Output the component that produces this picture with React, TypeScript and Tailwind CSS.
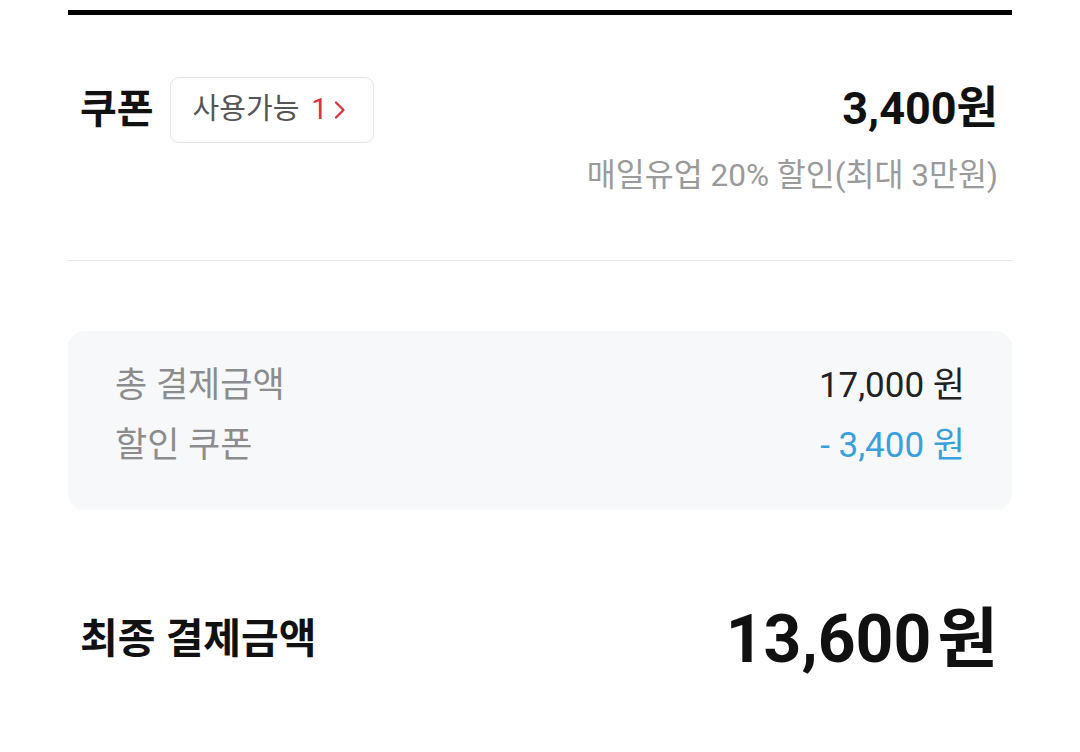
const font = { fontFamily: 'Roboto, "Noto Sans CJK KR", sans-serif' };

function Chevron() {
  return (
    <svg viewBox="0 0 12 20" className="ml-[6px] h-[20px] w-[12px]" fill="none" stroke="currentColor" strokeWidth={2.3} strokeLinecap="round" strokeLinejoin="round">
      <path d="M2 2.5 9.5 10 2 17.5" />
    </svg>
  );
}

export default function App() {
  return (
    <div className="min-h-screen bg-white px-[68px] pt-[10px]" style={font}>
      <div className="h-[5px] bg-black" />

      <div className="flex items-start justify-between pl-3 pr-[14px] pt-[62px]">
        <div className="flex items-center gap-[16px]">
          <span className="text-[40px] font-bold leading-none text-[#111]">쿠폰</span>
          <div className="flex h-[66px] items-center rounded-[9px] border border-[#e4e4e4] pl-[22px] pr-[27px] text-[29px] text-[#555]">
            <span>사용가능</span>
            <span className="ml-[12px] text-[#d8343f]">1</span>
            <span className="text-[#d8343f]">
              <Chevron />
            </span>
          </div>
        </div>
        <div className="flex flex-col items-end">
          <span className="mt-[6px] text-[45px] font-bold leading-[52px] text-[#111]">3,400원</span>
          <span className="mt-[21px] text-[31.5px] leading-[40px] text-[#9a9a9a]">매일유업 20% 할인(최대 3만원)</span>
        </div>
      </div>

      <div className="mt-[64px] h-px bg-[#e6e6e6]" />

      <div className="mt-[70px] flex h-[179px] flex-col justify-center gap-[16px] rounded-[16px] bg-[#f7f8fa] px-[47px] pb-[10px]">
        <div className="flex items-center justify-between text-[35px] leading-[44px]">
          <span className="text-[#8c8c8c]">총 결제금액</span>
          <span className="text-[#222]">17,000 원</span>
        </div>
        <div className="flex items-center justify-between text-[35px] leading-[44px]">
          <span className="text-[#8c8c8c]">할인 쿠폰</span>
          <span className="text-[#3a9fdb]">- 3,400 원</span>
        </div>
      </div>

      <div className="mt-[97px] flex items-center justify-between pl-3 pr-[14px]">
        <span className="text-[41px] font-bold text-[#111]">최종 결제금액</span>
        <span className="text-[66px] font-bold leading-none text-[#111]">
          13,600<span className="ml-[6px]">원</span>
        </span>
      </div>
    </div>
  );
}
